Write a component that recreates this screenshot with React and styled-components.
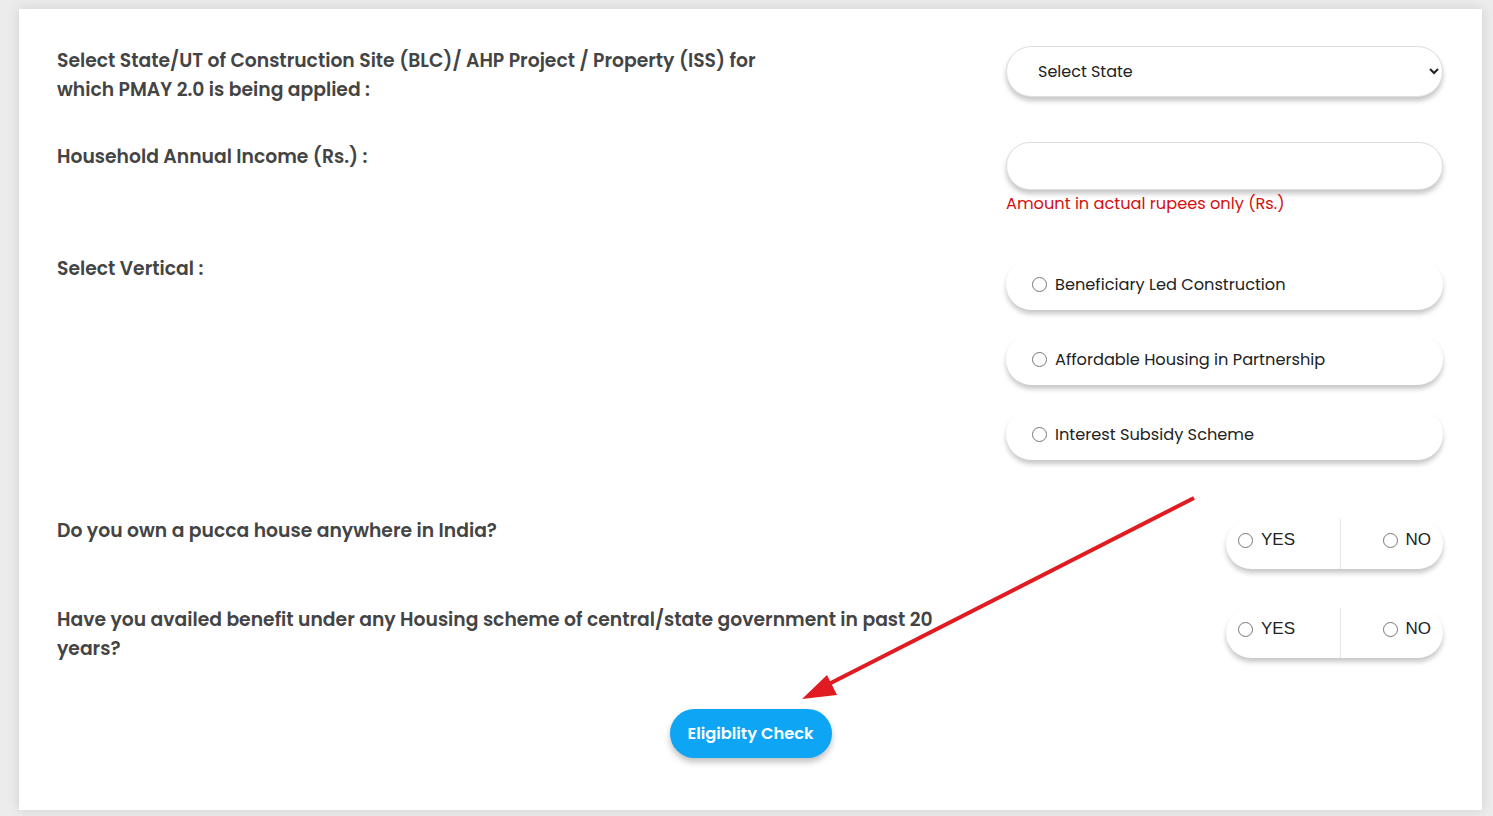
import React from "react";
import styled, { createGlobalStyle } from "styled-components";

const Global = createGlobalStyle`
  * { box-sizing: border-box; }
  body {
    margin: 0;
    background: #ececec;
    font-family: "Poppins", "Inter", "Noto Sans", sans-serif;
  }
`;

const Page = styled.div`
  padding: 9px 11px 6px 19px;
  height: 816px;
`;

const Card = styled.div`
  position: relative;
  background: #fff;
  height: 801px;
  padding: 37px 39px 0 38px;
  box-shadow: 0 0 12px rgba(0, 0, 0, 0.12);
`;

const Row = styled.div`
  display: grid;
  grid-template-columns: 1fr 437px;
  align-items: start;
  margin-top: ${(p) => p.$mt || 0}px;
`;

const Label = styled.div`
  font-size: 18.75px;
  font-weight: 600;
  line-height: 29px;
  color: #444;
  max-width: 730px;
  margin-top: ${(p) => p.$shift || 0}px;
`;

const Wide = styled(Label)`
  max-width: 900px;
`;

const Control = styled.div`
  display: flex;
  flex-direction: column;
`;

const Select = styled.select`
  height: 51px;
  border-radius: 26px;
  border: 1px solid #ddd;
  background: #fff;
  padding: 0 8px 0 27px;
  font-family: inherit;
  font-size: 16px;
  color: #222;
  box-shadow: 0 4px 5px rgba(0, 0, 0, 0.22);
  outline: none;
`;

const Input = styled.input`
  height: 48px;
  border-radius: 24px;
  border: 1px solid #ddd;
  background: #fff;
  box-shadow: 0 4px 5px rgba(0, 0, 0, 0.22);
  outline: none;
`;

const Hint = styled.div`
  color: #d40f0f;
  font-size: 16.2px;
  margin-top: 2px;
  line-height: 24px;
`;

const RadioList = styled.div`
  display: flex;
  flex-direction: column;
  gap: 24px;
  padding-top: 5px;
`;

const Pill = styled.label`
  display: flex;
  align-items: center;
  height: 51px;
  padding: 0 22px 0 24px;
  border-radius: 26px;
  background: #fff;
  box-shadow: 0 4px 5px rgba(0, 0, 0, 0.22);
  font-size: 16.2px;
  color: #222;
`;

const Radio = styled.input.attrs({ type: "radio" })`
  margin: 0 8px 0 2px;
  width: 15px;
  height: 15px;
`;

const Toggle = styled.div`
  justify-self: end;
  display: grid;
  grid-template-columns: 114px 103px;
  width: 217px;
  height: 50px;
  margin-top: 1px;
  border-radius: 25px;
  background: #fff;
  box-shadow: 0 4px 5px rgba(0, 0, 0, 0.22);
  font-family: "Liberation Sans", Arial, sans-serif;
  font-size: 17px;
  color: #222;
`;

const Side = styled.label`
  display: flex;
  align-items: center;
  justify-content: ${(p) => (p.$right ? "flex-end" : "flex-start")};
  padding: ${(p) => (p.$right ? "0 12px 8px 0" : "0 0 8px 10px")};
  border-left: ${(p) => (p.$right ? "1px solid #e6e6e6" : "none")};
`;

const ButtonRow = styled.div`
  display: flex;
  justify-content: center;
  margin-top: 46px;
  padding-left: 1px;
`;

const Button = styled.button`
  width: 162px;
  height: 49px;
  border-radius: 25px;
  border: none;
  background: #0ea5f4;
  color: #fff;
  font-family: inherit;
  font-size: 16.3px;
  font-weight: 600;
  box-shadow: 0 4px 6px rgba(0, 0, 0, 0.25);
`;

const Arrow = styled.svg`
  position: absolute;
  left: 0;
  top: 0;
  pointer-events: none;
`;

export default function App() {
  return (
    <>
      <Global />
      <Page>
        <Card>
          <Row>
            <Label>
              Select State/UT of Construction Site (BLC)/ AHP Project / Property (ISS) for which
              PMAY 2.0 is being applied :
            </Label>
            <Control>
              <Select defaultValue="">
                <option value="">Select State</option>
              </Select>
            </Control>
          </Row>
          <Row $mt={38}>
            <Label>Household Annual Income (Rs.) :</Label>
            <Control>
              <Input />
              <Hint>Amount in actual rupees only (Rs.)</Hint>
            </Control>
          </Row>
          <Row $mt={38}>
            <Label>Select Vertical :</Label>
            <RadioList>
              <Pill><Radio name="v" />Beneficiary Led Construction</Pill>
              <Pill><Radio name="v" />Affordable Housing in Partnership</Pill>
              <Pill><Radio name="v" />Interest Subsidy Scheme</Pill>
            </RadioList>
          </Row>
          <Row $mt={58}>
            <Label $shift={-2}>Do you own a pucca house anywhere in India?</Label>
            <Toggle>
              <Side><Radio name="q1" />YES</Side>
              <Side $right><Radio name="q1" />NO</Side>
            </Toggle>
          </Row>
          <Row $mt={38}>
            <Wide $shift={-2}>
              Have you availed benefit under any Housing scheme of central/state government in past 20
              years?
            </Wide>
            <Toggle>
              <Side><Radio name="q2" />YES</Side>
              <Side $right><Radio name="q2" />NO</Side>
            </Toggle>
          </Row>
          <ButtonRow>
            <Button>Eligiblity Check</Button>
          </ButtonRow>
          <Arrow width="1463" height="801" viewBox="0 0 1463 801">
            <line x1="1175" y1="489" x2="800" y2="680" stroke="#e01b22" strokeWidth="4" />
            <polygon points="783,690 808,666 818,686" fill="#e01b22" />
          </Arrow>
        </Card>
      </Page>
    </>
  );
}
